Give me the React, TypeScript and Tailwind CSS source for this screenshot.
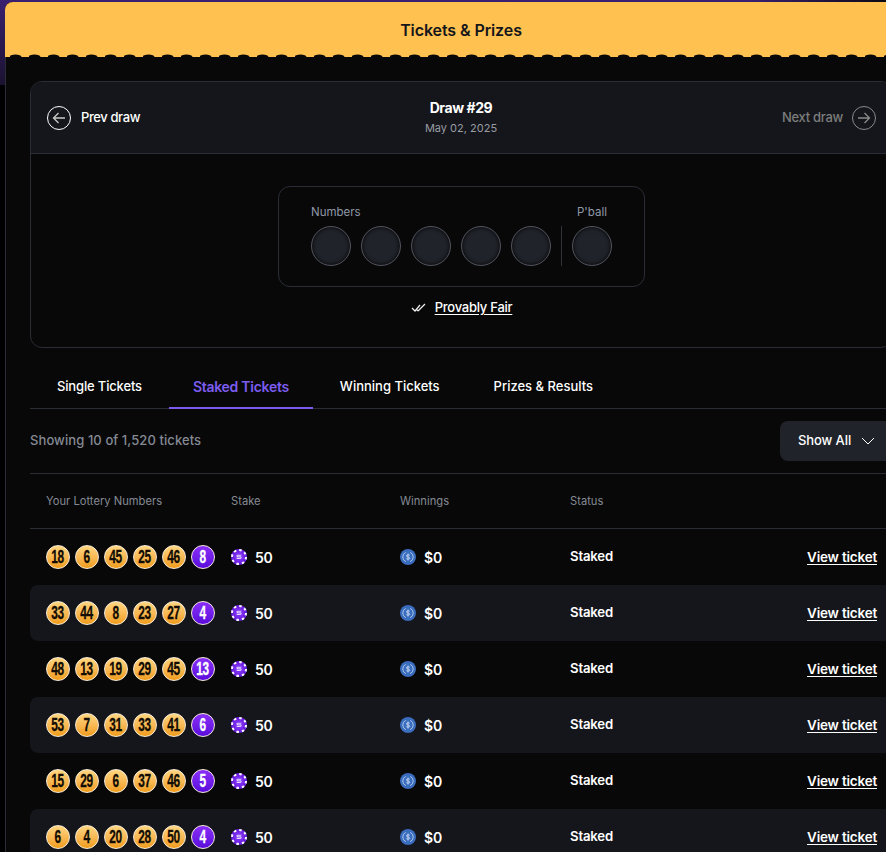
const rows = [
  { nums: [18, 6, 45, 25, 46], power: 8, shaded: false },
  { nums: [33, 44, 8, 23, 27], power: 4, shaded: true },
  { nums: [48, 13, 19, 29, 45], power: 13, shaded: false },
  { nums: [53, 7, 31, 33, 41], power: 6, shaded: true },
  { nums: [15, 29, 6, 37, 46], power: 5, shaded: false },
  { nums: [6, 4, 20, 28, 50], power: 4, shaded: true },
];

const tabs = ["Single Tickets", "Staked Tickets", "Winning Tickets", "Prizes & Results"];

function ArrowCircle({ dir, dim }: { dir: "left" | "right"; dim?: boolean }) {
  return (
    <svg width="24" height="24" viewBox="0 0 24 24" fill="none" stroke={dim ? "#8a8a8a" : "#ffffff"} strokeWidth="1">
      <circle cx="12" cy="12" r="11.5" />
      {dir === "left" ? (
        <path d="M18 12H6.5M11.5 7l-5 5 5 5" strokeWidth="1.3" stroke="#c8c8c8" />
      ) : (
        <path d="M6 12h11.5M12.500 7l5 5-5 5" strokeWidth="1.3" />
      )}
    </svg>
  );
}

function ChipIcon() {
  return (
    <svg width="16" height="16" viewBox="0 0 16 16" className="shrink-0">
      <circle cx="8" cy="8" r="8" fill="#6d1fe0" />
      <circle cx="8" cy="8" r="7" fill="none" stroke="#ffffff" strokeWidth="2" strokeDasharray="2.5 3" />
      <circle cx="8" cy="8" r="5" fill="#7a2cf0" />
      <path d="M10.4 6.3H6.6c-.8 0-.8 1.500 0 1.500h2.800c.9 0 .9 1.600 0 1.600H5.600" fill="none" stroke="#e4d4ff" strokeWidth="1.1" />
    </svg>
  );
}

function CoinIcon() {
  return (
    <svg width="16" height="16" viewBox="0 0 16 16" className="shrink-0">
      <circle cx="8" cy="8" r="8" fill="#3a6dbd" />
      <path d="M5.800 3.400a5 5 0 0 0 0 9.200M10.200 3.400a5 5 0 0 1 0 9.200" fill="none" stroke="#a9c4ec" strokeWidth="1" />
      <path d="M9.800 6.500c-.2-.8-3.400-1.200-3.400.4 0 1.600 3.400.7 3.400 2.300 0 1.500-3.400 1.100-3.600.2M8 4.500v7" fill="none" stroke="#c6d9f4" strokeWidth="0.9" />
    </svg>
  );
}

function Ball({ n, power }: { n: number; power?: boolean }) {
  return (
    <div
      className={`flex h-6 w-6 items-center justify-center rounded-full border border-[#f6ecdc] font-['Liberation_Sans',sans-serif] text-[18px] font-bold [-webkit-text-stroke:0.3px] ${
        power
          ? "bg-gradient-to-b from-[#8a2df7] to-[#5a08dc] text-white"
          : "bg-gradient-to-b from-[#ffd67f] to-[#f09c14] text-[#120c02]"
      }`}
    >
      <span className="inline-block scale-x-[0.66] tracking-[-0.5px]">{n}</span>
    </div>
  );
}

function EmptyBall() {
  return <div className="h-10 w-10 rounded-full border border-[#50535c] bg-[#20232a] shadow-[inset_0_0_4px_#000]" />;
}

export default function App() {
  return (
    <div className="h-[852px] w-[886px] overflow-hidden bg-black bg-[linear-gradient(90deg,transparent_85%,#0c0a14_100%),linear-gradient(180deg,#3a2070,#1a1230)] bg-[length:100%_85px] bg-no-repeat pl-[5px] pt-[2px] font-['Inter','Liberation_Sans',sans-serif]">
      <div className="h-[900px] w-[912px] overflow-hidden rounded-t-lg bg-[#080808]">
        {/* Header */}
        <div className="relative flex h-[55px] items-center justify-center bg-[#ffc14f] text-[16px] font-semibold tracking-[-0.1px] text-[#14161b]">
          <span>Tickets &amp; Prizes</span>
          <svg className="absolute bottom-0 left-0 h-[3px] w-full" preserveAspectRatio="none">
            <defs>
              <pattern id="scallop" x="5" width="19" height="3" patternUnits="userSpaceOnUse">
                <ellipse cx="5.500" cy="3" rx="6" ry="2.500" fill="#080808" />
              </pattern>
            </defs>
            <rect width="100%" height="3" fill="url(#scallop)" />
          </svg>
        </div>

        <div className="h-[845px] border-l border-[#2a2d36] px-[24px] pt-[24px]">
          {/* Draw card */}
          <div className="h-[267px] overflow-hidden rounded-xl border border-[#2a2d36]">
            <div className="flex h-[72px] items-center justify-between border-b border-[#2a2d36] bg-[#14161b] px-4">
              <div className="flex items-center gap-[10px] text-[13px] font-medium tracking-[-0.4px] text-white">
                <ArrowCircle dir="left" />
                <span>Prev draw</span>
              </div>
              <div className="text-center">
                <div className="text-sm font-bold tracking-[-0.42px] text-white">Draw #29</div>
                <div className="mt-[2px] text-[11px] text-[#9a9ca3]">May 02, 2025</div>
              </div>
              <div className="flex items-center gap-[9px] text-[13px] font-medium tracking-[-0.3px] text-[#7d7d7d]">
                <span>Next draw</span>
                <ArrowCircle dir="right" dim />
              </div>
            </div>

            <div className="flex flex-col items-center pt-[32px]">
              <div className="flex h-[101px] w-[367px] items-start rounded-xl border border-[#2a2d36] pl-[32px] pt-[18px]">
                <div>
                  <div className="mb-[7px] text-[11.500px] leading-[14px] text-[#8f98a8]">Numbers</div>
                  <div className="flex gap-[10px]">
                    <EmptyBall />
                    <EmptyBall />
                    <EmptyBall />
                    <EmptyBall />
                    <EmptyBall />
                  </div>
                </div>
                <div className="mx-[10px] mt-[21px] h-10 w-px bg-[#2f323a]" />
                <div className="flex flex-col items-center">
                  <div className="mb-[7px] text-[11.500px] leading-[14px] text-[#8f98a8]">P'ball</div>
                  <EmptyBall />
                </div>
              </div>
              <div className="mt-[11px] flex items-center gap-2 text-[13px] font-medium tracking-[-0.25px] text-white">
                <svg width="16" height="10" viewBox="0 0 16 10" fill="none" stroke="#f0f0f0" strokeWidth="1.2">
                  <path d="M1 5l3 3 5-6M7 8l7-7M5.500 6.500l1.500 1.500" />
                </svg>
                <span className="underline underline-offset-2">Provably Fair</span>
              </div>
            </div>
          </div>

          {/* Tabs */}
          <div className="mt-[17px] flex h-[44px] gap-[3px] border-b border-[#2a2d36] pl-[3px] text-[13px] font-medium text-white">
            {tabs.map((tab) => (
              <div
                key={tab}
                className={`flex items-center px-6 ${
                  tab === "Staked Tickets"
                    ? "-mb-px border-b-2 border-[#7c5cf0] text-[14px] font-semibold tracking-[-0.28px] text-[#7c5cf0]"
                    : tab === "Single Tickets"
                      ? "tracking-[-0.16px]"
                      : tab === "Prizes & Results"
                        ? "ml-[3px]"
                        : ""
                }`}
              >
                {tab}
              </div>
            ))}
          </div>

          {/* Filter */}
          <div className="flex h-[65px] items-center justify-between border-b border-[#2a2d36]">
            <span className="text-[13px] font-medium tracking-[0.08px] text-[#858a94]">Showing 10 of 1,520 tickets</span>
            <div className="flex h-10 w-[113px] items-center gap-[10px] rounded-lg bg-[#20232a] pl-[18px] text-[13px] font-medium tracking-[-0.1px] text-white">
              Show All
              <svg width="14" height="8" viewBox="0 0 14 8" fill="none" stroke="#ffffff" strokeWidth="1">
                <path d="M1 1l6 6 6-6" />
              </svg>
            </div>
          </div>

          {/* Table head */}
          <div className="grid h-[55px] grid-cols-[185px_169px_170px_1fr] items-center border-b border-[#2a2d36] pl-4 text-[11.200px] text-[#858a94]">
            <span>Your Lottery Numbers</span>
            <span>Stake</span>
            <span>Winnings</span>
            <span>Status</span>
          </div>

          {/* Rows */}
          {rows.map((row, i) => (
            <div
              key={i}
              className={`grid h-14 grid-cols-[185px_169px_170px_1fr_auto] items-center rounded-lg pl-4 pr-4 text-[14px] font-semibold tracking-[-0.2px] text-white ${
                row.shaded ? "bg-[#14161b]" : ""
              }`}
            >
              <div className="flex gap-[5px]">
                {row.nums.map((n, j) => (
                  <Ball key={j} n={n} />
                ))}
                <Ball n={row.power} power />
              </div>
              <div className="flex items-center gap-2">
                <ChipIcon />
                <span>50</span>
              </div>
              <div className="flex items-center gap-2">
                <CoinIcon />
                <span>$0</span>
              </div>
              <span className="-mt-px text-[13.200px] font-semibold">Staked</span>
              <span className="text-[13.500px] font-semibold underline underline-offset-2">View ticket</span>
            </div>
          ))}
        </div>
      </div>
    </div>
  );
}
